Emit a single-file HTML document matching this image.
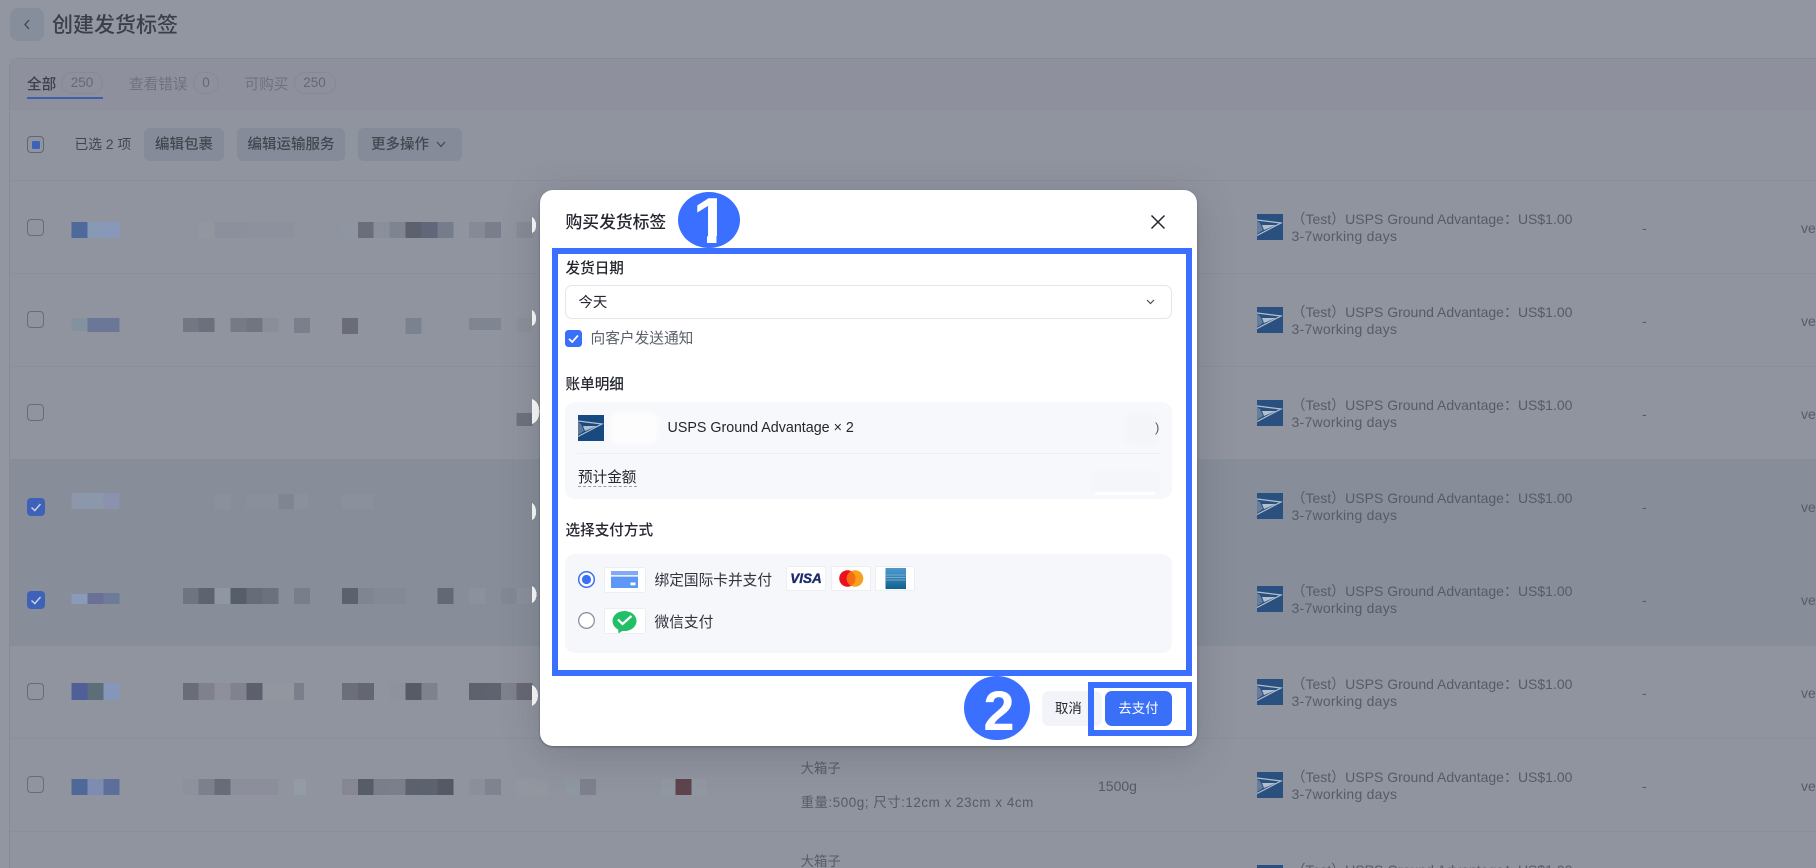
<!DOCTYPE html>
<html lang="zh-CN">
<head>
<meta charset="utf-8">
<title>购买发货标签</title>
<style>
html,body{margin:0;padding:0;width:1816px;height:868px;overflow:hidden;background:#9296a1}
body{font-family:"Liberation Sans","Noto Sans CJK SC",sans-serif;position:relative}
#wrap{position:absolute;left:0;top:0;width:1816px;height:868px;overflow:hidden;filter:blur(.3px)}
.a{position:absolute}
.t{position:absolute;white-space:nowrap;line-height:20px;height:20px}
.btn{position:absolute;background:#858b99;border-radius:6px;color:#42464f;font-size:14.5px;line-height:35px;text-align:center;height:33px;font-weight:500;overflow:hidden}
.badge{position:absolute;top:72px;height:20px;border:1px solid #868a96;border-radius:11px;color:#636875;font-size:13.5px;line-height:20px;text-align:center}
.line{position:absolute;left:10px;right:0;height:1px;background:#8b8f9b}
.cb{position:absolute;left:27px;width:15px;height:15px;border:1.5px solid #666c7c;border-radius:4px}
.cbon{position:absolute;left:27px;width:18px;height:18px;background:#3e62b8;border-radius:4px}
.u1{position:absolute;left:1291.5px;font-size:14px;line-height:20px;color:#565b68;white-space:nowrap}
.u2{position:absolute;left:1291.5px;font-size:14px;line-height:20px;color:#565b68;white-space:nowrap;letter-spacing:.25px}
.d{position:absolute;left:1642px;font-size:14px;line-height:20px;color:#565b68}
.v{position:absolute;left:1801px;font-size:14px;line-height:20px;color:#565b68;width:15px;overflow:hidden}
.logo{position:absolute;left:1257px;width:26px;height:26px}
.lab{color:#23262e;font-size:14.6px;font-weight:500;left:565.5px}
.tile{position:absolute;background:#fff;border:1px solid #eceef2;border-radius:2px;box-sizing:border-box}
</style>
</head>
<body>
<div id="wrap">
<svg width="0" height="0" style="position:absolute">
  <symbol id="usps" viewBox="0 0 26 26">
    <rect width="26" height="26" fill="currentColor"/>
    <path d="M0 6 L24 9 L0 21.5" fill="none" stroke="#b4bfce" stroke-width="1.2"/>
    <path d="M5 11 L19 11 L7 16 Z" fill="#b4bfce"/>
    <path d="M0 7 L0 20 L6 16 L3 9Z" fill="#8f9bad" opacity=".6"/>
  </symbol>
</svg>

<!-- header -->
<div class="a" style="left:10px;top:8px;width:34px;height:33px;background:#868d9b;border-radius:8px"></div>
<svg class="a" style="left:22px;top:18px" width="10" height="13" viewBox="0 0 10 13"><path d="M7 2 L3 6.5 L7 11" fill="none" stroke="#3f434c" stroke-width="1.3"/></svg>
<div class="t" style="left:52px;top:16px;font-size:21px;color:#3b3f48;font-weight:500">创建发货标签</div>

<!-- panel -->
<div class="a" style="left:9px;top:58px;right:0;height:810px;background:#90949f;border:1px solid #888b97;border-right:none;border-bottom:none;border-radius:10px 0 0 0;box-sizing:border-box"></div>
<div class="a" style="left:10px;top:59px;right:0;height:50px;background:#8e919d"></div>
<div class="line" style="top:109px"></div>

<!-- tabs -->
<div class="t" style="left:27px;top:75px;font-size:14.6px;color:#3b3f4a;font-weight:500">全部</div>
<div class="badge" style="left:61px;width:40px">250</div>
<div class="a" style="left:27px;top:97px;width:76px;height:2.4px;background:#3f5fa8"></div>
<div class="t" style="left:129px;top:75px;font-size:14.6px;color:#6d7280">查看错误</div>
<div class="badge" style="left:193px;width:24px">0</div>
<div class="t" style="left:244.5px;top:75px;font-size:14.6px;color:#6d7280">可购买</div>
<div class="badge" style="left:293.5px;width:40px">250</div>

<!-- toolbar -->
<div class="a" style="left:27px;top:136px;width:15px;height:15px;border:1.5px solid #5f6678;border-radius:4px"></div>
<div class="a" style="left:32px;top:141px;width:8px;height:8px;background:#3e62b8;border-radius:1px"></div>
<div class="t" style="left:74.5px;top:135px;font-size:13.8px;color:#42464f">已选 2 项</div>
<div class="btn" style="left:144px;top:128px;width:80px">编辑包裹</div>
<div class="btn" style="left:237px;top:128px;width:108px">编辑运输服务</div>
<div class="btn" style="left:358px;top:128px;width:104px;text-align:left;text-indent:13px">更多操作</div>
<svg class="a" style="left:435px;top:140px" width="12" height="9" viewBox="0 0 12 9"><path d="M2 2 L6 6.5 L10 2" fill="none" stroke="#42464f" stroke-width="1.2"/></svg>
<div class="line" style="top:180px"></div>

<!-- selected rows -->
<div class="a" style="left:10px;top:459px;right:0;height:187px;background:#878e99"></div>
<div class="line" style="top:273px"></div>
<div class="line" style="top:366px"></div>
<div class="line" style="top:738px"></div>
<div class="line" style="top:831px"></div>

<!-- checkboxes -->
<div class="cb" style="top:219px"></div>
<div class="cb" style="top:311px"></div>
<div class="cb" style="top:404px"></div>
<div class="cbon" style="top:498px"></div>
<svg class="a" style="left:27px;top:498px" width="18" height="18" viewBox="0 0 18 18"><path d="M4.5 9.5 L7.8 12.5 L13.5 6" fill="none" stroke="#c7d0e6" stroke-width="1.5"/></svg>
<div class="cbon" style="top:591px"></div>
<svg class="a" style="left:27px;top:591px" width="18" height="18" viewBox="0 0 18 18"><path d="M4.5 9.5 L7.8 12.5 L13.5 6" fill="none" stroke="#c7d0e6" stroke-width="1.5"/></svg>
<div class="cb" style="top:683px"></div>
<div class="cb" style="top:776px"></div>

<!-- mosaic -->
<svg class="a" style="left:0;top:0" width="800" height="868" viewBox="0 0 800 868" shape-rendering="crispEdges">
  <g>
    <rect x="71.3" y="222" width="16" height="16" fill="#4d6a9a"/><rect x="87.3" y="222" width="16" height="16" fill="#879ab5"/><rect x="103.3" y="222" width="16" height="16" fill="#8798ba"/>
    <rect x="198.7" y="222" width="16" height="16" fill="#92969f"/><rect x="214.5" y="222" width="32" height="16" fill="#8c909c"/><rect x="246.5" y="222" width="47" height="16" fill="#8d919d"/>
    <rect x="342" y="222" width="16" height="16" fill="#8f95a1"/><rect x="358" y="222" width="16" height="16" fill="#6a6e7c"/><rect x="373.6" y="222" width="16" height="16" fill="#8a8f9b"/><rect x="389.5" y="222" width="16" height="16" fill="#7f8491"/><rect x="405.5" y="222" width="16" height="16" fill="#5d606e"/><rect x="421.5" y="222" width="16" height="16" fill="#62667a"/><rect x="437.3" y="222" width="16" height="16" fill="#757c8a"/>
    <rect x="469" y="222" width="16" height="16" fill="#868a97"/><rect x="485" y="222" width="16" height="16" fill="#7a7d8b"/><rect x="516.5" y="222" width="16" height="16" fill="#878b97"/>
  </g>
  <g>
    <rect x="71.3" y="318" width="16" height="13" fill="#84929f"/><rect x="87.3" y="318" width="32" height="14" fill="#6c7798"/>
    <rect x="182.8" y="318" width="16" height="14" fill="#747783"/><rect x="198.7" y="318" width="16" height="14" fill="#6c707c"/><rect x="230.7" y="318" width="16" height="14" fill="#767a86"/><rect x="246.6" y="318" width="16" height="14" fill="#72757f"/><rect x="262.5" y="318" width="16" height="14" fill="#8a8e9a"/>
    <rect x="294" y="318" width="16" height="15" fill="#7b7f8b"/>
    <rect x="342" y="318" width="16" height="16" fill="#6a6c78"/><rect x="405.5" y="318" width="16" height="16" fill="#7b828f"/><rect x="469" y="318" width="32" height="12" fill="#7f8591"/><rect x="516.5" y="318" width="16" height="14" fill="#8c9099"/>
  </g>
  <rect x="516.5" y="413" width="16" height="13" fill="#6e727c"/>
  <g>
    <rect x="71.3" y="493" width="16" height="16" fill="#8c97ab"/><rect x="87.3" y="493" width="16" height="16" fill="#8a98a9"/><rect x="103.3" y="493" width="16" height="16" fill="#8b92af"/>
    <rect x="214.5" y="494" width="16" height="15" fill="#8a919c"/><rect x="246.6" y="494" width="32" height="15" fill="#89909b"/><rect x="278.4" y="494" width="16" height="15" fill="#7f8692"/><rect x="294" y="494" width="14" height="15" fill="#8a919c"/>
    <rect x="342" y="494" width="32" height="15" fill="#8a919c"/>
  </g>
  <g>
    <rect x="71.3" y="594" width="16" height="10" fill="#8a9ab9"/><rect x="87.3" y="593" width="16" height="11" fill="#6a7195"/><rect x="103.3" y="593" width="16" height="11" fill="#6d7a98"/>
    <rect x="182.8" y="588" width="16" height="16" fill="#6e7480"/><rect x="198.7" y="588" width="16" height="16" fill="#5d636f"/><rect x="214.5" y="588" width="16" height="16" fill="#8f97a2"/><rect x="230.7" y="588" width="16" height="16" fill="#575e6b"/><rect x="246.6" y="588" width="16" height="16" fill="#666d79"/><rect x="262.4" y="588" width="16" height="16" fill="#6b717d"/><rect x="294" y="588" width="16" height="16" fill="#787e8a"/>
    <rect x="342" y="588" width="16" height="16" fill="#5c616d"/><rect x="358" y="588" width="16" height="16" fill="#7f8591"/><rect x="373.6" y="588" width="32" height="16" fill="#838995"/><rect x="437.3" y="588" width="16" height="16" fill="#626874"/>
    <rect x="469" y="588" width="16" height="16" fill="#8c929d"/><rect x="501" y="588" width="16" height="16" fill="#838994"/><rect x="516.5" y="588" width="16" height="16" fill="#8b909b"/>
  </g>
  <g>
    <rect x="71.3" y="683" width="16" height="17" fill="#505f97"/><rect x="87.3" y="683" width="16" height="17" fill="#5d6e78"/><rect x="103.3" y="683" width="16" height="17" fill="#8497ba"/>
    <rect x="182.8" y="683" width="16" height="17" fill="#6a6c78"/><rect x="198.7" y="683" width="16" height="17" fill="#7f818d"/><rect x="214.5" y="683" width="16" height="17" fill="#8e8f9b"/><rect x="230.7" y="683" width="16" height="17" fill="#80838f"/><rect x="246.6" y="683" width="16" height="17" fill="#5d606c"/><rect x="262.4" y="683" width="32" height="17" fill="#92969f"/><rect x="294" y="683" width="10" height="17" fill="#7c7f8b"/>
    <rect x="342" y="683" width="16" height="17" fill="#6c6e7a"/><rect x="358" y="683" width="16" height="17" fill="#646672"/><rect x="389.5" y="683" width="16" height="17" fill="#8f929d"/><rect x="405.5" y="683" width="16" height="17" fill="#575b68"/><rect x="421.5" y="683" width="16" height="17" fill="#7f828d"/>
    <rect x="469" y="683" width="16" height="17" fill="#5f616f"/><rect x="485" y="683" width="16" height="17" fill="#5f626f"/><rect x="501" y="683" width="16" height="17" fill="#7f828d"/><rect x="516.5" y="683" width="16" height="17" fill="#686874"/>
  </g>
  <g>
    <rect x="71.3" y="779" width="16" height="16" fill="#4f6898"/><rect x="87.3" y="779" width="16" height="16" fill="#7f8cb1"/><rect x="103.3" y="779" width="16" height="16" fill="#5c6e9a"/>
    <rect x="182.8" y="779" width="16" height="16" fill="#8d919d"/><rect x="198.7" y="779" width="16" height="16" fill="#7d808c"/><rect x="214.5" y="779" width="16" height="16" fill="#676c78"/><rect x="230.7" y="779" width="48" height="16" fill="#8c8f9b"/><rect x="294" y="779" width="12" height="16" fill="#939ba6"/>
    <rect x="342" y="779" width="16" height="16" fill="#868793"/><rect x="358" y="779" width="16" height="16" fill="#575c69"/><rect x="373.6" y="779" width="16" height="16" fill="#7a7d8a"/><rect x="389.5" y="779" width="16" height="16" fill="#7b7f8b"/><rect x="405.5" y="779" width="16" height="16" fill="#5c616e"/><rect x="421.5" y="779" width="16" height="16" fill="#5d626f"/><rect x="437.3" y="779" width="16" height="16" fill="#555966"/>
    <rect x="469" y="779" width="16" height="16" fill="#8a8f9b"/><rect x="485" y="779" width="16" height="16" fill="#7f838f"/><rect x="516.5" y="779" width="32" height="16" fill="#92969f"/>
    <rect x="565" y="779" width="15" height="16" fill="#8f97a2"/><rect x="580" y="779" width="16" height="16" fill="#7e818d"/>
    <rect x="661" y="779" width="15" height="16" fill="#9298a2"/><rect x="675.7" y="779" width="16" height="16" fill="#5f444e"/><rect x="692" y="779" width="15" height="16" fill="#9298a2"/>
  </g>
  <g fill="#fff">
    <path d="M532 217 C537 219 538 231 532 233 Z"/>
    <path d="M532 310 C537 312 538 324 532 326 Z"/>
    <path d="M532 399 C542 402 542 421 532 424 Z"/>
    <path d="M532 503 C537 505 538 518 532 520 Z"/>
    <path d="M532 586 C538 588 538 601 532 603 Z"/>
    <path d="M532 685 C540 688 540 703 532 706 Z"/>
  </g>
</svg>

<!-- product texts -->
<div class="t" style="left:800.6px;top:759px;font-size:13.4px;color:#565b67">大箱子</div>
<div class="t" style="left:800.6px;top:793px;font-size:13.4px;color:#565b67;letter-spacing:.55px">重量:500g; 尺寸:12cm x 23cm x 4cm</div>
<div class="t" style="left:1098px;top:776px;font-size:14px;color:#565b67">1500g</div>
<div class="t" style="left:800.6px;top:852px;font-size:13.4px;color:#565b67;height:16px;overflow:hidden">大箱子</div>

<!-- USPS rows -->
<svg class="logo" style="top:214px;color:#2a5080"><use href="#usps"/></svg>
<div class="u1" style="top:209px">（Test）USPS Ground Advantage：US$1.00</div><div class="u2" style="top:226px">3-7working days</div><div class="d" style="top:218px">-</div><div class="v" style="top:218px">ve</div>
<svg class="logo" style="top:307px;color:#2a5080"><use href="#usps"/></svg>
<div class="u1" style="top:302px">（Test）USPS Ground Advantage：US$1.00</div><div class="u2" style="top:319px">3-7working days</div><div class="d" style="top:311px">-</div><div class="v" style="top:311px">ve</div>
<svg class="logo" style="top:400px;color:#2a5080"><use href="#usps"/></svg>
<div class="u1" style="top:395px">（Test）USPS Ground Advantage：US$1.00</div><div class="u2" style="top:412px">3-7working days</div><div class="d" style="top:404px">-</div><div class="v" style="top:404px">ve</div>
<svg class="logo" style="top:493px;color:#2a5080"><use href="#usps"/></svg>
<div class="u1" style="top:488px">（Test）USPS Ground Advantage：US$1.00</div><div class="u2" style="top:505px">3-7working days</div><div class="d" style="top:497px">-</div><div class="v" style="top:497px">ve</div>
<svg class="logo" style="top:586px;color:#2a5080"><use href="#usps"/></svg>
<div class="u1" style="top:581px">（Test）USPS Ground Advantage：US$1.00</div><div class="u2" style="top:598px">3-7working days</div><div class="d" style="top:590px">-</div><div class="v" style="top:590px">ve</div>
<svg class="logo" style="top:679px;color:#2a5080"><use href="#usps"/></svg>
<div class="u1" style="top:674px">（Test）USPS Ground Advantage：US$1.00</div><div class="u2" style="top:691px">3-7working days</div><div class="d" style="top:683px">-</div><div class="v" style="top:683px">ve</div>
<svg class="logo" style="top:772px;color:#2a5080"><use href="#usps"/></svg>
<div class="u1" style="top:767px">（Test）USPS Ground Advantage：US$1.00</div><div class="u2" style="top:784px">3-7working days</div><div class="d" style="top:776px">-</div><div class="v" style="top:776px">ve</div>
<div class="a" style="left:1250px;top:860px;width:340px;height:8px;overflow:hidden">
  <svg style="position:absolute;left:7px;top:5px;width:26px;height:3px;color:#2a5080" viewBox="0 0 26 3"><use href="#usps" width="26" height="26"/></svg>
  <div class="u1" style="left:41.5px;top:0">（Test）USPS Ground Advantage：US$1.00</div>
</div>

<!-- modal -->
<div class="a" style="left:540px;top:190px;width:656.5px;height:556px;background:#fff;border-radius:13px;box-shadow:0 8px 40px rgba(40,44,56,.22),0 1px 2px rgba(40,44,56,.4)"></div>
<div class="t" style="left:565.5px;top:212.5px;font-size:16.8px;color:#23262e;font-weight:500">购买发货标签</div>
<svg class="a" style="left:1150px;top:214px" width="16" height="16" viewBox="0 0 16 16"><path d="M1.5 1.5 L14.5 14.5 M14.5 1.5 L1.5 14.5" stroke="#23262e" stroke-width="1.5" fill="none"/></svg>

<div class="t lab" style="top:258.5px">发货日期</div>
<div class="a" style="left:565px;top:285px;width:607px;height:34px;box-sizing:border-box;border:1px solid #e3e5ea;border-radius:7px;background:#fff"></div>
<div class="t" style="left:578.5px;top:293px;font-size:14.4px;color:#23262e">今天</div>
<svg class="a" style="left:1145px;top:298px" width="11" height="8" viewBox="0 0 11 8"><path d="M2 2 L5.5 5.5 L9 2" stroke="#4a4e58" stroke-width="1.2" fill="none"/></svg>

<div class="a" style="left:565px;top:330px;width:17px;height:17px;background:#3a6ff8;border-radius:3.5px"></div>
<svg class="a" style="left:565px;top:330px" width="17" height="17" viewBox="0 0 17 17"><path d="M4 8.8 L7.2 12 L13 5.5" stroke="#fff" stroke-width="1.7" fill="none"/></svg>
<div class="t" style="left:590.5px;top:329px;font-size:14.7px;color:#5a5f6a">向客户发送通知</div>

<div class="t lab" style="top:375px">账单明细</div>
<div class="a" style="left:565px;top:402px;width:607px;height:97px;background:#f7f8fb;border-radius:10px"></div>
<div class="a" style="left:610px;top:412px;width:48px;height:32px;background:#fdfdfe;border-radius:8px;filter:blur(3px)"></div>
<div class="a" style="left:1125px;top:414px;width:32px;height:30px;background:#f3f5f8;border-radius:6px;filter:blur(2px)"></div>
<div class="a" style="left:1092px;top:470px;width:68px;height:24px;background:#f5f6fa;border-radius:6px;filter:blur(1.5px)"></div>
<div class="a" style="left:1095px;top:492px;width:60px;height:3px;background:#fff"></div>
<svg class="a" style="left:578px;top:414.5px;color:#164a80" width="26" height="26"><use href="#usps"/></svg>
<div class="t" style="left:667.5px;top:418px;font-size:14.3px;color:#23262e">USPS Ground Advantage × 2</div>
<div class="t" style="left:1155px;top:418px;font-size:13px;color:#555a66">)</div>
<div class="a" style="left:577px;top:453px;width:583px;height:1px;background:#eceef2"></div>
<div class="t" style="left:578px;top:467.5px;font-size:14.6px;color:#23262e">预计金额</div>
<div class="a" style="left:578px;top:485.5px;width:59px;height:0;border-top:1px dashed #9a9eaa"></div>

<div class="t lab" style="top:521px">选择支付方式</div>
<div class="a" style="left:565px;top:554px;width:607px;height:99px;background:#f6f7fb;border-radius:10px"></div>

<!-- radios -->
<svg class="a" style="left:577px;top:569.5px" width="19" height="19" viewBox="0 0 19 19"><circle cx="9.5" cy="9.5" r="7.8" fill="#fff" stroke="#3b6ff6" stroke-width="1.5"/><circle cx="9.5" cy="9.5" r="4.6" fill="#3b6ff6"/></svg>
<svg class="a" style="left:577px;top:610.5px" width="19" height="19" viewBox="0 0 19 19"><circle cx="9.5" cy="9.5" r="7.8" fill="#fff" stroke="#8d90a3" stroke-width="1.3"/></svg>

<!-- card tile -->
<div class="tile" style="left:603.5px;top:566.5px;width:42px;height:26px"></div>
<svg class="a" style="left:611px;top:571px" width="27" height="17" viewBox="0 0 27 17"><rect width="27" height="4.2" fill="#7fabf9"/><rect y="5.6" width="27" height="11.4" fill="#5f97f7"/><rect x="19.5" y="11.5" width="5" height="2.8" fill="#fff"/></svg>
<div class="t" style="left:654.5px;top:571px;font-size:14.7px;color:#30333c">绑定国际卡并支付</div>

<div class="tile" style="left:785.5px;top:566px;width:40px;height:25px"></div>
<svg class="a" style="left:785.5px;top:566px" width="40" height="25" viewBox="0 0 40 25"><text x="20" y="17" text-anchor="middle" font-family="Liberation Sans" font-size="13.5" font-weight="700" font-style="italic" fill="#1a2a6c" stroke="#1a2a6c" stroke-width=".35">VISA</text></svg>
<div class="tile" style="left:830.5px;top:566px;width:40px;height:25px"></div>
<svg class="a" style="left:830.5px;top:566px" width="40" height="25" viewBox="0 0 40 25"><circle cx="16.5" cy="12.5" r="8.3" fill="#eb101e"/><circle cx="24" cy="12.5" r="8.3" fill="#f7a01b"/><path d="M20.2 5.2 a8.3 8.3 0 0 1 0 14.6 a8.3 8.3 0 0 1 0 -14.6z" fill="#fb6a11"/></svg>
<div class="tile" style="left:875px;top:566px;width:40px;height:25px"></div>
<svg class="a" style="left:875px;top:566px" width="40" height="25" viewBox="0 0 40 25"><defs><linearGradient id="ax" x1="0" y1="0" x2="0" y2="1"><stop offset="0" stop-color="#4d9ad0"/><stop offset="1" stop-color="#13618f"/></linearGradient></defs><rect x="10.5" y="2" width="20.5" height="21" fill="url(#ax)"/><path d="M11 9h19.5M11 11.5h19.5M11 14h19.5" stroke="#8fbbd8" stroke-width=".8"/></svg>

<!-- wechat tile -->
<div class="tile" style="left:603.5px;top:608px;width:42px;height:26px"></div>
<svg class="a" style="left:611px;top:609.5px" width="27" height="24" viewBox="0 0 27 24"><ellipse cx="13.5" cy="11" rx="12" ry="10" fill="#22bf66"/><path d="M7 17 L7.5 23.5 L13.5 19.5Z" fill="#22bf66"/><path d="M7 9.5 L11.5 14 L20.5 6" stroke="#fff" stroke-width="2.2" fill="none"/></svg>
<div class="t" style="left:654.5px;top:612.5px;font-size:14.7px;color:#30333c">微信支付</div>

<!-- footer buttons -->
<div class="a" style="left:1042px;top:691px;width:60px;height:35px;background:#f2f4fa;border-radius:7px"></div>
<div class="t" style="left:1055px;top:698.5px;font-size:13.4px;color:#23262e">取消</div>
<div class="a" style="left:1105px;top:691px;width:67px;height:35px;background:#3a6ff8;border-radius:7px;color:#fff;font-size:13.4px;line-height:35px;text-align:center">去支付</div>

<!-- annotation boxes -->
<div class="a" style="left:552px;top:248px;width:640px;height:428px;box-sizing:border-box;border:6px solid #3a6fff"></div>
<div class="a" style="left:1088px;top:682px;width:104px;height:54px;box-sizing:border-box;border:6px solid #3a6fff"></div>

<!-- numbered circles -->
<svg class="a" style="left:678px;top:192px" width="62" height="56" viewBox="0 0 62 56"><defs><clipPath id="e1"><ellipse cx="31" cy="28" rx="31" ry="28"/></clipPath></defs><ellipse cx="31" cy="28" rx="31" ry="28" fill="#3a6fff"/><text x="33" y="51" text-anchor="middle" font-family="Liberation Sans" font-size="65" font-weight="700" fill="#fff">1</text><g clip-path="url(#e1)" fill="#3a6fff"><rect x="0" y="44" width="29" height="10"/><rect x="38.5" y="44" width="24" height="10"/></g></svg>
<svg class="a" style="left:964px;top:676px" width="66" height="64" viewBox="0 0 66 64"><ellipse cx="33" cy="32" rx="33" ry="32" fill="#3a6fff"/><text x="35" y="54" text-anchor="middle" font-family="Liberation Sans" font-size="56" font-weight="700" fill="#fff">2</text></svg>
</div>
</body>
</html>
